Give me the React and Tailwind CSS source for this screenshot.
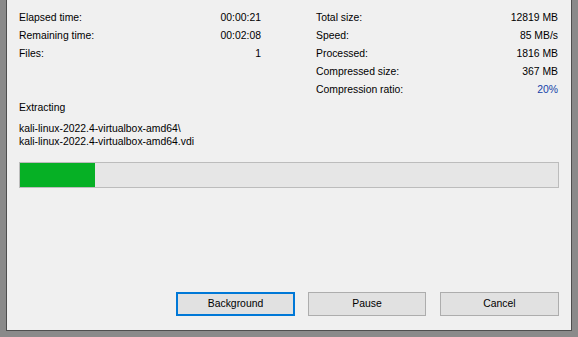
const stats = {
  left: [
    ["Elapsed time:", "00:00:21"],
    ["Remaining time:", "00:02:08"],
    ["Files:", "1"],
  ],
  right: [
    ["Total size:", "12819 MB"],
    ["Speed:", "85 MB/s"],
    ["Processed:", "1816 MB"],
    ["Compressed size:", "367 MB"],
    ["Compression ratio:", "20%"],
  ],
};

const Row = ({ label, value, blue }) => (
  <div className="flex h-[18px] items-center justify-between">
    <span>{label}</span>
    <span className={blue ? "text-[#1442a8]" : ""}>{value}</span>
  </div>
);

export default function App() {
  const progress = 14;

  return (
    <div className="w-[578px] h-[337px] bg-[#8a8a8a] overflow-hidden">
      <div className="ml-[6px] w-[566px] h-[331px] bg-[#f0f0f0] border-x border-b border-[#4e4e4e] flex flex-col px-[12px] pt-[9px] text-[10.4px] text-black font-['Liberation_Sans',Arial,sans-serif]">
        <div className="grid grid-cols-[242px_242px] gap-x-[55px]">
          <div>
            {stats.left.map(([l, v]) => (
              <Row key={l} label={l} value={v} />
            ))}
          </div>
          <div>
            {stats.right.map(([l, v]) => (
              <Row key={l} label={l} value={v} blue={l === "Compression ratio:"} />
            ))}
          </div>
        </div>

        <div className="h-[18px] flex items-center">Extracting</div>
        <div className="mt-[5px] leading-[13px]">
          <div>kali-linux-2022.4-virtualbox-amd64\</div>
          <div>kali-linux-2022.4-virtualbox-amd64.vdi</div>
        </div>

        {/* progress bar */}
        <div className="mt-[14px] h-[26px] w-[540px] border border-[#bcbcbc] bg-[#e6e6e6]">
          <div className="h-full bg-[#06b025]" style={{ width: `${progress}%` }} />
        </div>

        <div className="mt-auto mb-[14px] flex justify-end">
          <button className="w-[119px] h-[24px] bg-[#e1e1e1] border-2 border-[#0078d7]">
            Background
          </button>
          <button className="ml-[13px] w-[118px] h-[24px] bg-[#e1e1e1] border border-[#adadad]">
            Pause
          </button>
          <button className="ml-[14px] w-[119px] h-[24px] bg-[#e1e1e1] border border-[#adadad]">
            Cancel
          </button>
        </div>
      </div>
    </div>
  );
}
